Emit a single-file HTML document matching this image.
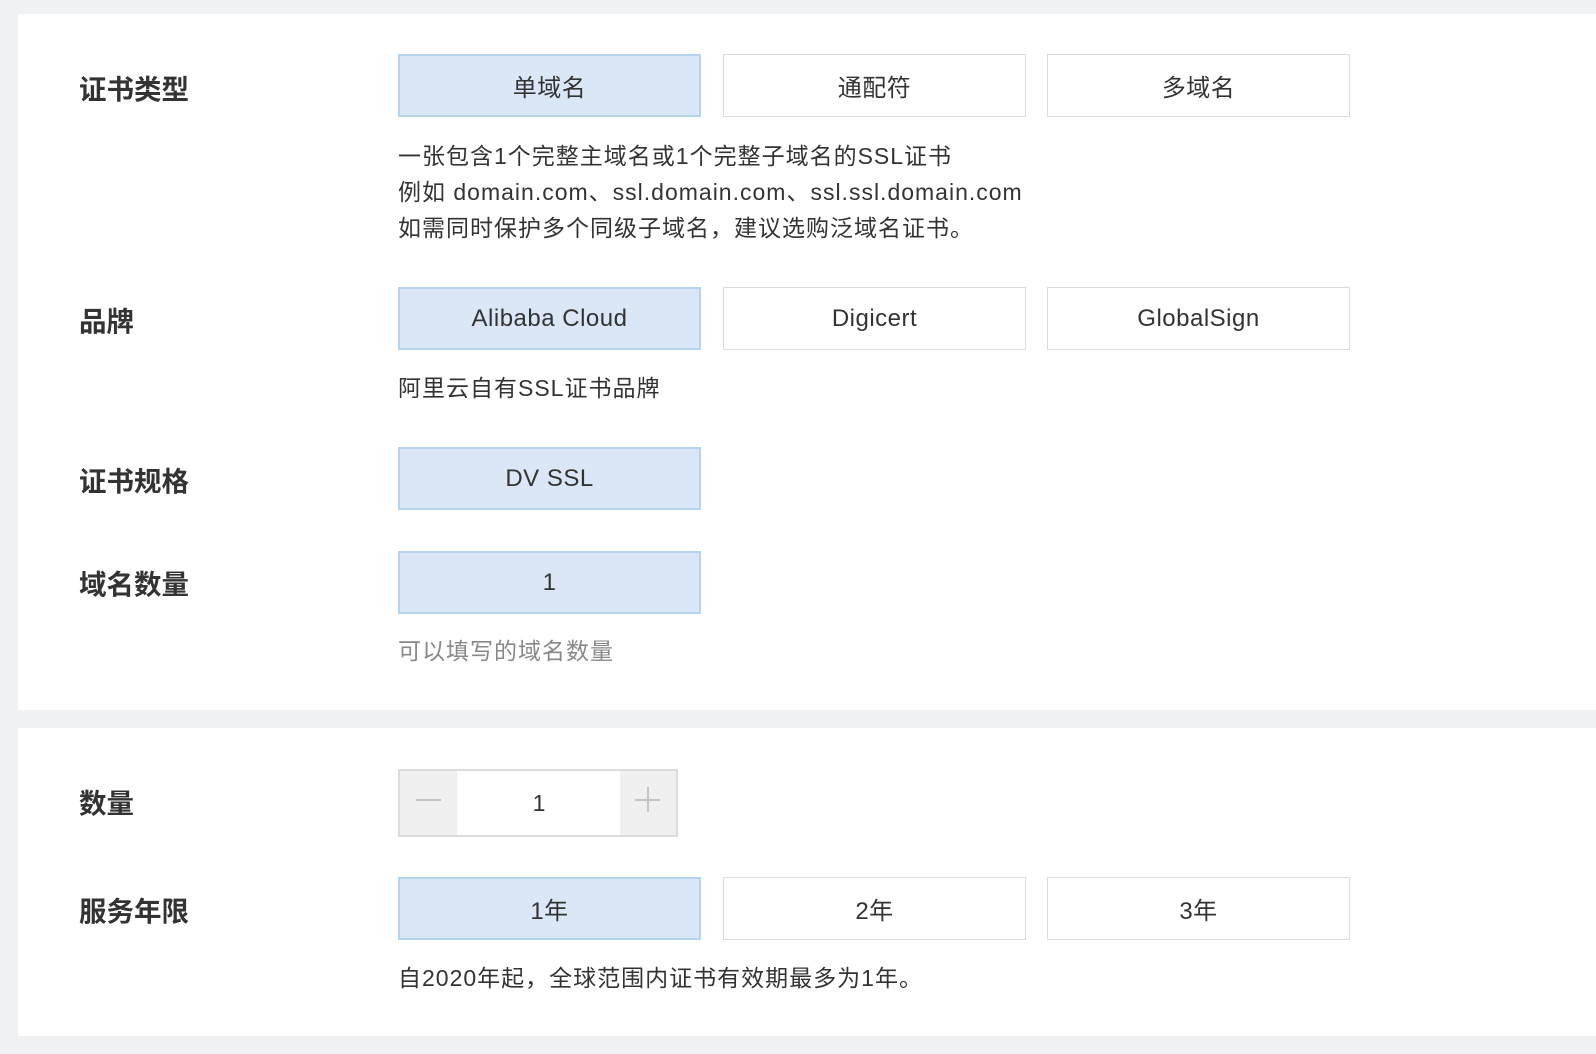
<!DOCTYPE html>
<html><head><meta charset="utf-8"><style>
*{margin:0;padding:0;box-sizing:border-box}
body{width:1596px;height:1054px;background:#f0f1f3;font-family:"Liberation Sans","Noto Sans CJK SC",sans-serif;color:#333;position:relative;overflow:hidden}
.panel{position:absolute;left:18px;right:0;background:#fff}
.abs{position:absolute}
.lbl{position:absolute;left:79px;font-size:27.5px;font-weight:bold;color:#333;line-height:30px}
.btn{position:absolute;width:303px;height:63px;border:1px solid #dcdcdc;background:#fff;font-size:24px;letter-spacing:.5px;color:#333;display:flex;align-items:center;justify-content:center}
.sel{background:#dbe7f6;border:2px solid #b3d3ee}
.desc{position:absolute;left:398px;font-size:23px;letter-spacing:1px;line-height:36px;color:#333}
</style></head><body>
<div class="panel" style="top:14px;height:696px"></div>
<div class="panel" style="top:728px;height:308px"></div>

<div class="lbl" style="top:75px">证书类型</div>
<div class="btn sel" style="left:398px;top:54px">单域名</div>
<div class="btn" style="left:723px;top:54px">通配符</div>
<div class="btn" style="left:1047px;top:54px">多域名</div>
<div class="desc" style="top:138px">一张包含1个完整主域名或1个完整子域名的SSL证书<br>例如 domain.com、ssl.domain.com、ssl.ssl.domain.com<br>如需同时保护多个同级子域名，建议选购泛域名证书。</div>

<div class="lbl" style="top:307px">品牌</div>
<div class="btn sel" style="left:398px;top:287px">Alibaba Cloud</div>
<div class="btn" style="left:723px;top:287px">Digicert</div>
<div class="btn" style="left:1047px;top:287px">GlobalSign</div>
<div class="desc" style="top:370px">阿里云自有SSL证书品牌</div>

<div class="lbl" style="top:467px">证书规格</div>
<div class="btn sel" style="left:398px;top:447px">DV SSL</div>

<div class="lbl" style="top:570px">域名数量</div>
<div class="btn sel" style="left:398px;top:551px">1</div>
<div class="desc" style="top:633px;color:#888">可以填写的域名数量</div>

<div class="lbl" style="top:789px">数量</div>
<div class="abs" style="left:398px;top:769px;width:280px;height:68px;border:2px solid #dcdcdc;background:#fff">
 <div class="abs" style="left:0;top:0;width:57px;height:64px;background:#f0f0f0"><div class="abs" style="left:16px;top:28px;width:25px;height:2px;background:#c4c4c4"></div></div>
 <div class="abs" style="left:57px;top:0;width:164px;height:64px;font-size:23px;display:flex;align-items:center;justify-content:center">1</div>
 <div class="abs" style="right:0;top:0;width:56px;height:64px;background:#f0f0f0"><div class="abs" style="left:15px;top:28px;width:25px;height:2px;background:#c4c4c4"></div><div class="abs" style="left:27px;top:16px;width:2px;height:25px;background:#c4c4c4"></div></div>
</div>

<div class="lbl" style="top:897px">服务年限</div>
<div class="btn sel" style="left:398px;top:877px">1年</div>
<div class="btn" style="left:723px;top:877px">2年</div>
<div class="btn" style="left:1047px;top:877px">3年</div>
<div class="desc" style="top:960px">自2020年起，全球范围内证书有效期最多为1年。</div>
</body></html>
